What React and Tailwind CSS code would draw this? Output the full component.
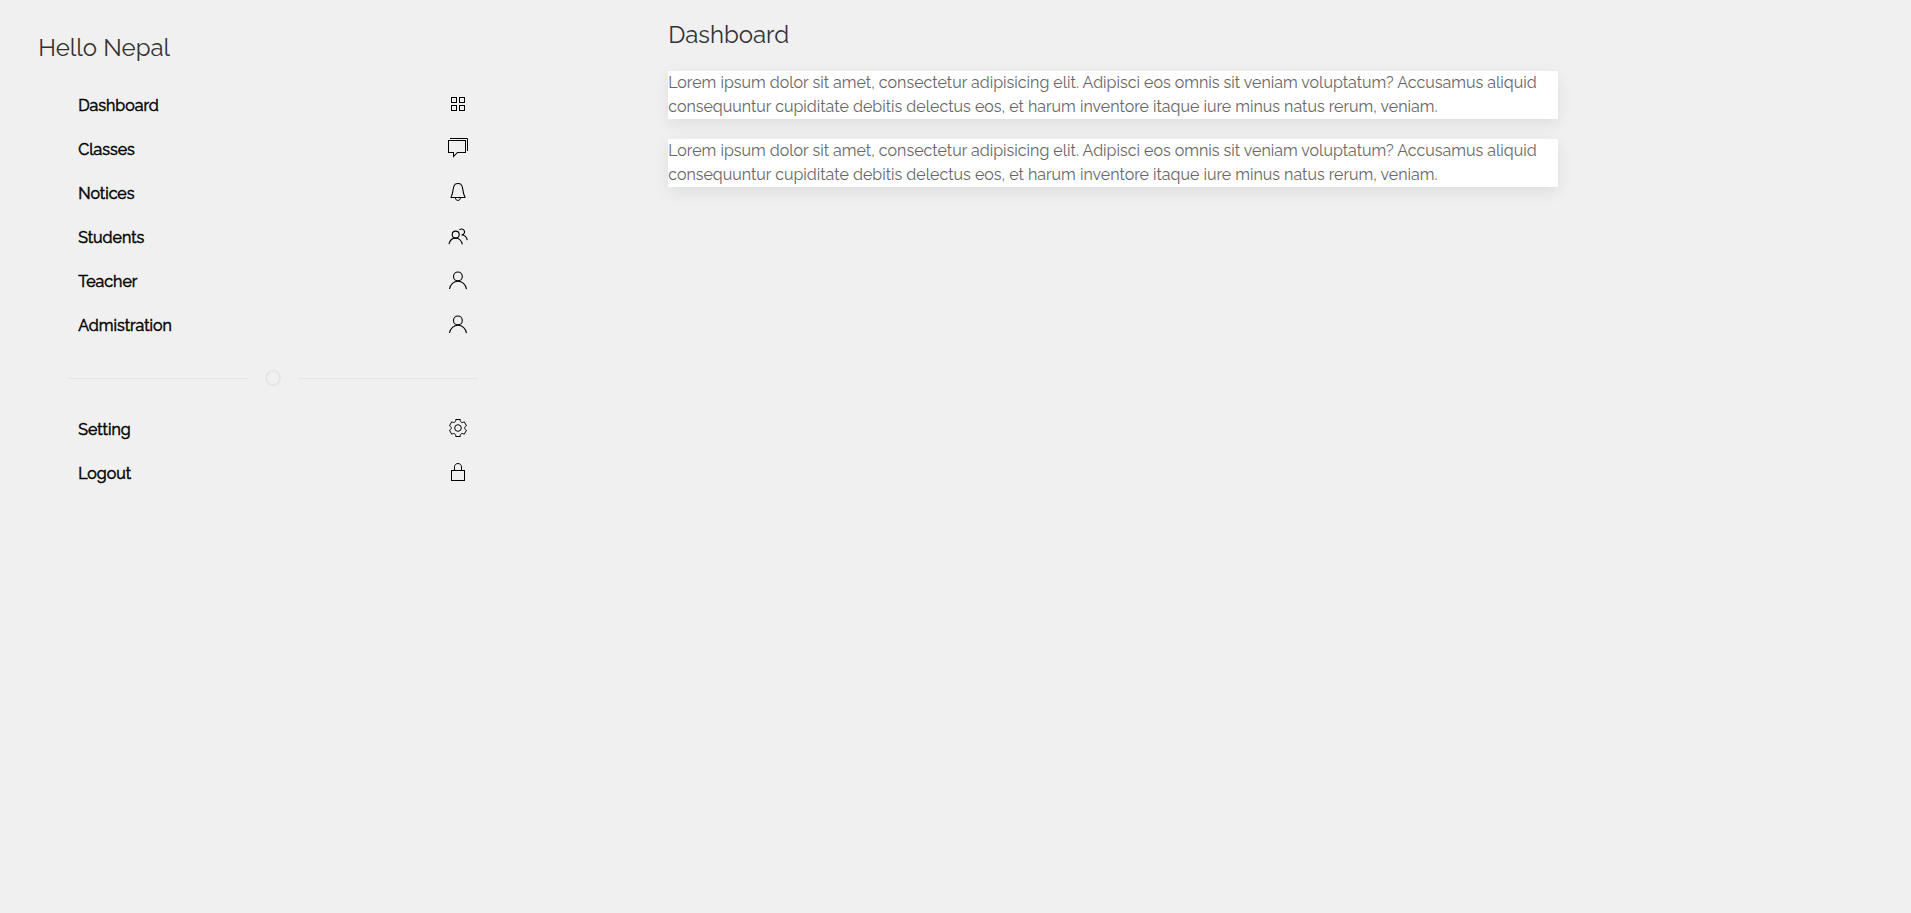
const icons = {
  thumbnails: (
    <>
      <rect x="3.5" y="3.5" width="5" height="5" />
      <rect x="11.5" y="3.5" width="5" height="5" />
      <rect x="11.5" y="11.5" width="5" height="5" />
      <rect x="3.5" y="11.5" width="5" height="5" />
    </>
  ),
  comments: (
    <>
      <polyline points="2 0.5 19.5 0.5 19.5 13" />
      <path
        fill="#000"
        stroke="none"
        d="M5,19.71 L5,15 L0,15 L0,2 L18,2 L18,15 L9.71,15 L5,19.71 Z M1,14 L6,14 L6,17.29 L9.29,14 L17,14 L17,3 L1,3 L1,14 Z"
      />
    </>
  ),
  bell: (
    <>
      <path
        strokeWidth="1.1"
        d="M17,15.5 L3,15.5 C2.99,14.61 3.79,13.34 4.1,12.51 C4.58,11.3 4.72,10.35 5.19,7.01 C5.54,4.53 5.89,3.2 7.28,2.16 C8.13,1.56 9.37,1.5 9.81,1.5 L9.96,1.5 C9.96,1.5 11.62,1.41 12.67,2.17 C14.08,3.2 14.42,4.54 14.77,7.02 C15.26,10.35 15.4,11.31 15.87,12.52 C16.2,13.34 17.01,14.61 17,15.5 Z"
      />
      <path d="M12.39,16 C12.39,17.37 11.35,18.43 9.91,18.43 C8.48,18.43 7.42,17.37 7.42,16" />
    </>
  ),
  users: (
    <g strokeWidth="1.1">
      <circle cx="7.7" cy="8.6" r="3.5" />
      <path d="M1,18.1 C1.7,14.6 4.4,12.1 7.6,12.1 C10.9,12.1 13.7,14.8 14.3,18.3" />
      <path d="M11.4,4 C12.8,2.4 15.4,2.8 16.3,4.7 C17.2,6.6 15.7,8.9 13.6,8.9 C16.5,8.9 18.8,11.3 19.2,14.1" />
    </g>
  ),
  user: (
    <g strokeWidth="1.1">
      <circle cx="9.9" cy="6.4" r="4.4" />
      <path d="M1.5,19 C2.3,14.5 5.8,11.2 10,11.2 C14.2,11.2 17.7,14.6 18.5,19.2" />
    </g>
  ),
  cog: (
    <>
      <circle cx="9.997" cy="10" r="3.31" />
      <path d="M18.488,12.285 L16.205,16.237 C15.322,15.496 14.185,15.281 13.303,15.791 C12.428,16.289 12.047,17.373 12.246,18.5 L7.735,18.5 C7.938,17.374 7.553,16.299 6.684,15.791 C5.801,15.27 4.655,15.492 3.773,16.237 L1.5,12.285 C2.573,11.871 3.317,10.999 3.317,9.991 C3.305,8.98 2.573,8.121 1.5,7.716 L3.765,3.784 C4.645,4.516 5.794,4.738 6.687,4.232 C7.555,3.722 7.939,2.637 7.735,1.5 L12.263,1.5 C12.072,2.637 12.441,3.71 13.314,4.22 C14.206,4.73 15.343,4.516 16.225,3.794 L18.487,7.714 C17.404,8.117 16.661,8.988 16.67,10.009 C16.672,11.018 17.415,11.88 18.488,12.285 Z" />
    </>
  ),
  lock: (
    <>
      <rect x="3.5" y="8.5" width="13" height="10" />
      <path d="M6.5,8 L6.5,4.88 C6.5,3.01 8.07,1.5 10,1.5 C11.93,1.5 13.5,3.01 13.5,4.88 L13.5,8" />
    </>
  ),
};

const mainLinks = [
  ["Dashboard", "thumbnails"],
  ["Classes", "comments"],
  ["Notices", "bell"],
  ["Students", "users"],
  ["Teacher", "user"],
  ["Admistration", "user"],
];

const accountLinks = [
  ["Setting", "cog"],
  ["Logout", "lock"],
];

function NavList({ links }) {
  return (
    <ul>
      {links.map(([label, icon]) => (
        <li key={label}>
          <a
            href="#"
            className="flex items-start justify-between p-2.5 text-base leading-6 text-black [-webkit-text-stroke:0.5px_#000]"
          >
            <span>{label}</span>
            <svg width="20" height="20" viewBox="0 0 20 20" fill="none" stroke="#000">
              {icons[icon]}
            </svg>
          </a>
        </li>
      ))}
    </ul>
  );
}

function Divider() {
  return (
    <div className="my-5 flex h-5 items-center">
      <div className="h-px flex-1 bg-[#e5e5e5]" />
      <svg className="mx-[15px]" width="20" height="20" viewBox="0 0 20 20" fill="none" stroke="#e5e5e5" strokeWidth="2">
        <circle cx="10" cy="10" r="7" />
      </svg>
      <div className="h-px flex-1 bg-[#e5e5e5]" />
    </div>
  );
}

function Notice() {
  return (
    <p className="bg-white text-base leading-6 whitespace-nowrap text-[#666] shadow-[0_5px_15px_rgba(0,0,0,0.08)]">
      Lorem ipsum dolor sit amet, consectetur adipisicing elit. Adipisci eos omnis sit veniam voluptatum? Accusamus aliquid
      <br />
      consequuntur cupiditate debitis delectus eos, et harum inventore itaque iure minus natus rerum, veniam.
    </p>
  );
}

export default function App() {
  return (
    <div className="flex min-h-screen bg-[#f0f0f0] font-[Raleway,Lato,sans-serif] font-normal">
      <aside className="w-[508.4px] shrink-0 pt-[30.6px] pr-[30px] pl-[38.2px]">
        <h3 className="mb-5 text-2xl leading-[33.6px] text-[#333]">Hello Nepal</h3>
        <nav className="pl-[30px]">
          <NavList links={mainLinks} />
          <Divider />
          <NavList links={accountLinks} />
        </nav>
      </aside>
      <main className="ml-[159.8px] w-[890px] pt-[17.7px]">
        <h3 className="mb-5 text-2xl leading-[33.6px] text-[#333]">Dashboard</h3>
        <div className="flex flex-col gap-5">
          <Notice />
          <Notice />
        </div>
      </main>
    </div>
  );
}
